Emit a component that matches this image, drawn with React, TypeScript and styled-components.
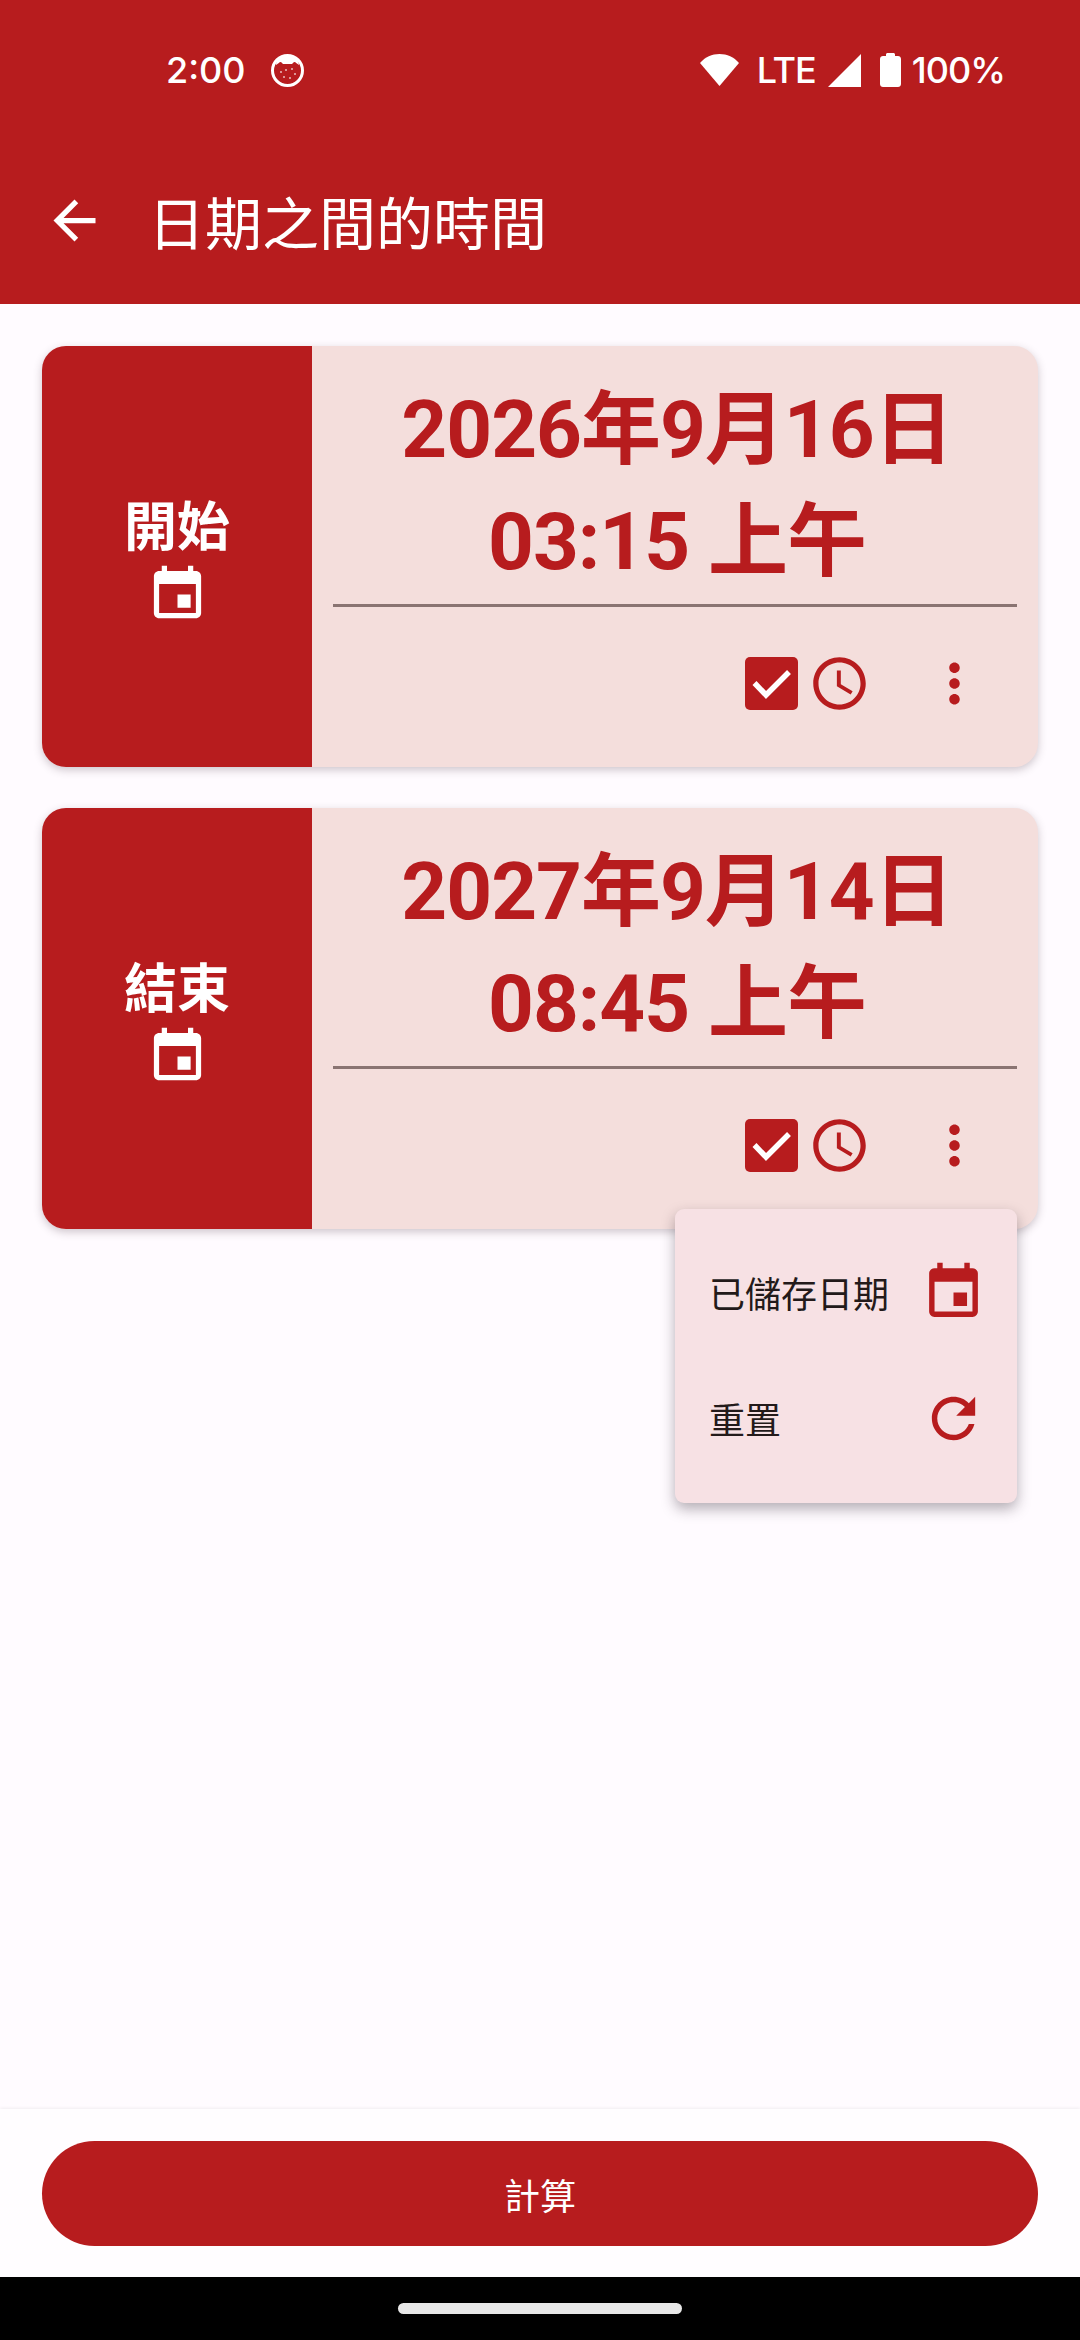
import styled, { createGlobalStyle } from "styled-components";

const RED = "#b71c1e";

const GlobalStyle = createGlobalStyle`
  html, body {
    margin: 0;
    padding: 0;
  }
  body {
    font-family: Roboto, "Noto Sans CJK TC", sans-serif;
  }
`;

const Page = styled.div`
  width: 1080px;
  height: 2340px;
  display: flex;
  flex-direction: column;
  background: #fffbff;
  overflow: hidden;
`;

const Header = styled.header`
  background: ${RED};
  height: 304px;
  color: #fff;
  flex-shrink: 0;
`;

const StatusBar = styled.div`
  height: 140px;
  display: flex;
  align-items: center;
  justify-content: space-between;
  padding: 0 75px 0 166px;
  font-family: Inter, sans-serif;
  font-size: 36px;
  font-weight: 500;
`;

const StatusGroup = styled.div`
  display: flex;
  align-items: center;
`;

const SystemIcons = styled(StatusGroup)`
  letter-spacing: -1px;
`;

const Clock = styled.span`
  margin-right: 26px;
`;

const NotifySvg = styled.svg`
  display: block;
  margin-left: -1px;
`;

const WifiSvg = styled.svg`
  display: block;
  margin-right: 18px;
`;

const SignalSvg = styled.svg`
  display: block;
  margin: 0 19px 0 12px;
`;

const BatterySvg = styled.svg`
  display: block;
  margin-right: 11px;
`;

const Toolbar = styled.div`
  display: flex;
  align-items: center;
  height: 160px;
  padding-left: 43px;
`;

const Title = styled.h1`
  margin: 0 0 0 42px;
  font-size: 57px;
  font-weight: 400;
  line-height: 1;
  font-family: "Noto Sans CJK TC", sans-serif;
`;

const Main = styled.main`
  position: relative;
  flex: 1;
  display: flex;
  flex-direction: column;
  gap: 41px;
  padding: 42px;
`;

const Card = styled.section`
  height: 421px;
  display: flex;
  border-radius: 24px;
  overflow: hidden;
  background: #f4dedc;
  box-shadow: 0 3px 9px rgba(60, 40, 50, 0.25);
`;

const Side = styled.div`
  width: 270px;
  flex-shrink: 0;
  box-sizing: border-box;
  padding-top: 5px;
  background: ${RED};
  color: #fff;
  display: flex;
  flex-direction: column;
  align-items: center;
  justify-content: center;
  font-size: 53px;
  font-weight: 700;
  line-height: 70px;
`;

const Body = styled.div`
  flex: 1;
  padding: 28px 21px 0;
  display: flex;
  flex-direction: column;
`;

const DateText = styled.div`
  color: ${RED};
  font-size: 80px;
  font-weight: 700;
  line-height: 112px;
  letter-spacing: -1px;
  padding-left: 4px;
  text-align: center;
  white-space: nowrap;
`;

const Divider = styled.hr`
  border: 0;
  height: 3px;
  margin: 6px 0 0;
  background: #8a7472;
`;

const Actions = styled.div`
  display: flex;
  align-items: center;
  justify-content: flex-end;
  margin-top: 45px;
  padding-right: 31px;
`;

const CheckBox = styled.span`
  width: 53px;
  height: 53px;
  border-radius: 5px;
  background: ${RED};
  display: block;
`;

const CheckSvg = styled.svg`
  display: block;
`;

const TimeButton = styled.span`
  display: flex;
  margin: 0 52px 0 10px;
`;

const Menu = styled.div`
  position: absolute;
  top: 905px;
  left: 675px;
  width: 342px;
  height: 294px;
  padding: 20px 0 0;
  box-sizing: border-box;
  background: #f7e1e4;
  border-radius: 9px;
  box-shadow: 0 6px 14px rgba(40, 30, 40, 0.35);
  display: flex;
  flex-direction: column;
`;

const MenuItem = styled.div`
  height: 126px;
  display: flex;
  align-items: center;
  justify-content: space-between;
  padding: 0 31px 0 34px;
  font-size: 36px;
  color: #231a1a;
  font-family: "Noto Sans CJK TC", sans-serif;
`;

const BottomBar = styled.div`
  height: 168px;
  flex-shrink: 0;
  box-sizing: border-box;
  padding: 32px 42px 0;
  background: #fffdff;
  box-shadow: 0 -1px 3px rgba(0, 0, 0, 0.06);
`;

const CalcButton = styled.button`
  width: 100%;
  height: 105px;
  border: 0;
  border-radius: 53px;
  background: ${RED};
  color: #fff;
  font-size: 36px;
  font-family: "Noto Sans CJK TC", sans-serif;
`;

const NavBar = styled.div`
  height: 63px;
  flex-shrink: 0;
  background: #000;
  display: flex;
  justify-content: center;
  padding-top: 26px;
  box-sizing: border-box;
`;

const NavPill = styled.div`
  width: 284px;
  height: 11px;
  border-radius: 6px;
  background: #e8e8e8;
`;

const IconSvg = styled.svg`
  display: block;
  flex-shrink: 0;
`;

const Icon = ({ d, size = 63, color = "currentColor" }: { d: string; size?: number; color?: string }) => (
  <IconSvg width={size} height={size} viewBox="0 0 24 24" fill={color}>
    <path d={d} />
  </IconSvg>
);

const EVENT =
  "M17 12h-5v5h5v-5zM16 1v2H8V1H6v2H5c-1.11 0-1.99.9-1.99 2L3 19c0 1.1.89 2 2 2h14c1.1 0 2-.9 2-2V5c0-1.1-.9-2-2-2h-1V1h-2zm3 18H5V8h14v11z";
const ACCESS_TIME =
  "M11.99 2C6.47 2 2 6.48 2 12s4.47 10 9.99 10C17.52 22 22 17.52 22 12S17.52 2 11.99 2zM12 20c-4.42 0-8-3.58-8-8s3.58-8 8-8 8 3.58 8 8-3.58 8-8 8zm.5-13H11v6l5.25 3.15.75-1.23-4.5-2.67z";
const MORE_VERT =
  "M12 8c1.1 0 2-.9 2-2s-.9-2-2-2-2 .9-2 2 .9 2 2 2zm0 2c-1.1 0-2 .9-2 2s.9 2 2 2 2-.9 2-2-.9-2-2-2zm0 6c-1.1 0-2 .9-2 2s.9 2 2 2 2-.9 2-2-.9-2-2-2z";
const REFRESH =
  "M17.65 6.35C16.2 4.9 14.21 4 12 4c-4.42 0-7.99 3.58-7.99 8s3.57 8 7.99 8c3.73 0 6.84-2.55 7.73-6h-2.08c-.82 2.33-3.04 4-5.65 4-3.31 0-6-2.69-6-6s2.69-6 6-6c1.66 0 3.14.69 4.22 1.78L13 11h7V4l-2.35 2.35z";
const ARROW_BACK = "M20 11H7.83l5.59-5.59L12 4l-8 8 8 8 1.41-1.41L7.83 13H20v-2z";

const NotifyIcon = () => (
  <NotifySvg width="33" height="33" viewBox="0 0 33 33">
    <circle cx="16.5" cy="16.5" r="15" fill="none" stroke="#fff" strokeWidth="3" />
    <path d="M5 11c2-1 3-3 5-3l2 2h9l2-2c2 0 3 2 5 3 0-5-5-9-12-9S5 6 5 11z" fill="#fff" />
    <g fill="#fff" opacity="0.7">
      <circle cx="10" cy="18" r="1" />
      <circle cx="15" cy="16" r="1" />
      <circle cx="21" cy="15" r="1" />
      <circle cx="24" cy="20" r="1" />
      <circle cx="13" cy="23" r="1" />
      <circle cx="19" cy="24" r="1" />
    </g>
  </NotifySvg>
);

const StatusIcons = () => (
  <SystemIcons>
    <WifiSvg width="39" height="32" viewBox="0 0 39 32">
      <path d="M0 9C5 3 12 0 19.5 0S34 3 39 9L19.5 32z" fill="#fff" />
    </WifiSvg>
    <span>LTE</span>
    <SignalSvg width="33" height="33" viewBox="0 0 33 33">
      <path d="M33 0v33H0z" fill="#fff" />
    </SignalSvg>
    <BatterySvg width="21" height="34" viewBox="0 0 21 34">
      <path d="M6 3V1.500C6 .7 6.700 0 7.500 0h6c.8 0 1.500.7 1.500 1.500V3h3c1.600 0 3 1.300 3 3v25c0 1.700-1.400 3-3 3H3c-1.600 0-3-1.300-3-3V6c0-1.700 1.400-3 3-3z" fill="#fff" />
    </BatterySvg>
    <span>100%</span>
  </SystemIcons>
);

const entries = [
  { label: "開始", date: "2026年9月16日", time: "03:15 上午" },
  { label: "結束", date: "2027年9月14日", time: "08:45 上午" },
];

export default function App() {
  return (
    <Page>
      <GlobalStyle />
      <Header>
        <StatusBar>
          <StatusGroup>
            <Clock>2:00</Clock>
            <NotifyIcon />
          </StatusGroup>
          <StatusIcons />
        </StatusBar>
        <Toolbar>
          <Icon d={ARROW_BACK} />
          <Title>日期之間的時間</Title>
        </Toolbar>
      </Header>
      <Main>
        {entries.map((entry) => (
          <Card key={entry.label}>
            <Side>
              {entry.label}
              <Icon d={EVENT} />
            </Side>
            <Body>
              <DateText>{entry.date}</DateText>
              <DateText>{entry.time}</DateText>
              <Divider />
              <Actions>
                <CheckBox>
                  <CheckSvg width="53" height="53" viewBox="0 0 53 53">
                    <path d="M9.500 26L21 38 44 15" fill="none" stroke="#fff" strokeWidth="5.500" />
                  </CheckSvg>
                </CheckBox>
                <TimeButton>
                  <Icon d={ACCESS_TIME} color={RED} />
                </TimeButton>
                <Icon d={MORE_VERT} color={RED} />
              </Actions>
            </Body>
          </Card>
        ))}
        <Menu>
          <MenuItem>
            已儲存日期
            <Icon d={EVENT} size={65} color={RED} />
          </MenuItem>
          <MenuItem>
            重置
            <Icon d={REFRESH} size={65} color={RED} />
          </MenuItem>
        </Menu>
      </Main>
      <BottomBar>
        <CalcButton>計算</CalcButton>
      </BottomBar>
      <NavBar>
        <NavPill />
      </NavBar>
    </Page>
  );
}
